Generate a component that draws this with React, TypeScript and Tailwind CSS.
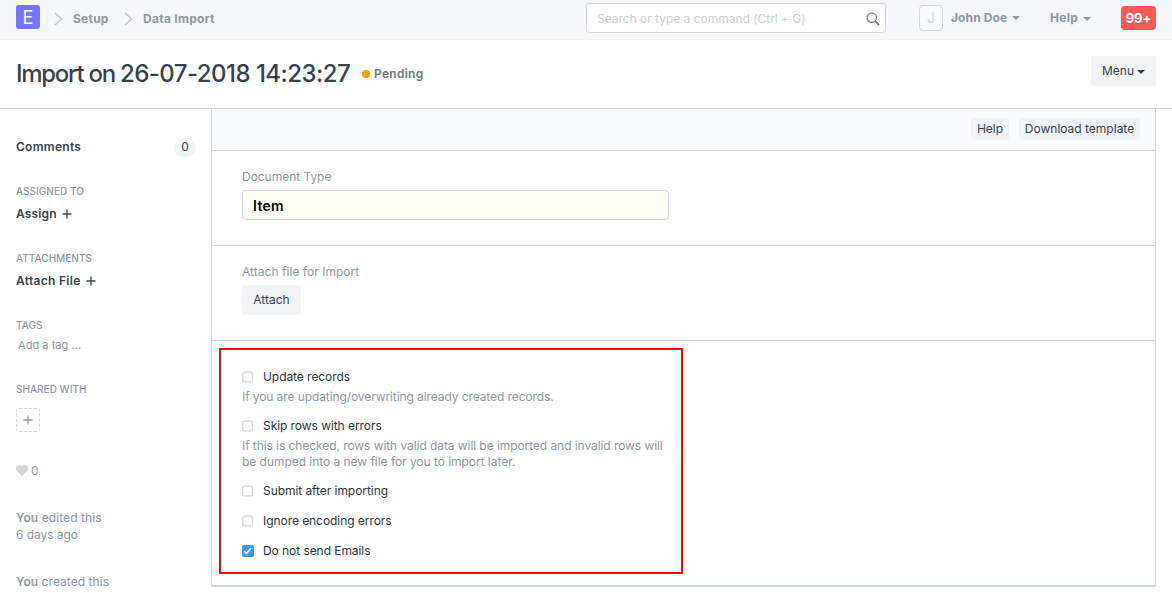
import React from "react";

function Caret({ className = "" }: { className?: string }) {
  return (
    <svg className={className} width="8" height="4" viewBox="0 0 8 4" fill="currentColor">
      <path d="M0 0h8L4 4z" />
    </svg>
  );
}

function Chevron() {
  return (
    <svg width="9" height="14" viewBox="0 0 9 14" fill="none" stroke="#c0c9d2" strokeWidth="1.6">
      <path d="M1 1l6.5 6L1 13" />
    </svg>
  );
}

function Plus({ color = "#36414c" }: { color?: string }) {
  return (
    <svg width="10" height="10" viewBox="0 0 10 10" fill="none" stroke={color} strokeWidth="1.3">
      <path d="M5 0.5v9M0.5 5h9" />
    </svg>
  );
}

function Check({ label, checked = false }: { label: string; checked?: boolean }) {
  return (
    <label className="flex h-4 items-center text-[#2b3440]">
      {checked ? (
        <span className="flex h-3 w-[11.5px] items-center justify-center rounded-[2px] bg-[#3b99fc]">
          <svg width="9" height="8" viewBox="0 0 9 8" fill="none" stroke="#fff" strokeWidth="1.6">
            <path d="M1 4l2.4 2.3L8 1.3" />
          </svg>
        </span>
      ) : (
        <span className="flex h-3 w-[11.5px]">
          <svg width="12" height="12" viewBox="0 0 12 12" fill="#fff" stroke="#d1d8dd" strokeWidth="1.4">
            <rect x="0.7" y="0.9" width="10.2" height="10.2" rx="1.8" />
          </svg>
        </span>
      )}
      <span className="ml-[9.5px] tracking-[-0.06px]">{label}</span>
    </label>
  );
}

function SideHeading({ children }: { children: React.ReactNode }) {
  return <h6 className="h-4 text-[10px] leading-4 font-medium tracking-[0.03px] text-[#8d99a6]">{children}</h6>;
}

export default function App() {
  return (
    <div className="flex h-[593px] w-[1172px] flex-col overflow-hidden bg-white font-['Inter',sans-serif] text-xs leading-4 text-[#36414c]">
      <header className="flex h-10 shrink-0 items-start border-b border-[#ebeff2] bg-[#f5f7fa] px-4 font-bold text-[#8d99a6]">
        <div className="mt-[5px] flex size-6 items-center justify-center rounded-[3px] bg-[#7575ff] pt-0.5 text-[18px] leading-6 font-normal text-white">
          E
        </div>
        <div className="mt-[11px] ml-[14px] flex items-center">
          <Chevron />
          <span className="ml-[10px] w-[36px] tracking-[0.25px]">Setup</span>
          <span className="ml-[15px] flex"><Chevron /></span>
          <span className="ml-[10px] tracking-[0.28px]">Data Import</span>
        </div>
        <div className="mt-[3px] ml-auto flex h-[30px] w-[300px] items-center rounded-[3px] border border-[#d1d8dd] bg-white pt-px pr-[5px] pl-[10px] font-normal text-[#c9d1d8]">
          <span className="tracking-[-0.02px]">Search or type a command (Ctrl + G)</span>
          <svg className="ml-auto" width="14" height="14" viewBox="0 0 14 14" fill="none" stroke="#6c7680">
            <circle cx="5.700" cy="5.700" r="4.700" strokeWidth="1.2" />
            <path d="M9.200 9.200l4 4" strokeWidth="1.800" />
          </svg>
        </div>
        <div className="mt-[5px] ml-[33px] flex h-[26px] w-6 shrink-0 items-center justify-center rounded border border-[#d1d8dd] bg-[#fafbfc] text-[14px] font-normal text-[#d1d8dd]">
          J
        </div>
        <div className="mt-[10px] ml-2 flex w-[99px] items-center">
          <span className="tracking-[0.1px]">John Doe</span>
          <Caret className="ml-[5px]" />
        </div>
        <div className="mt-[10px] flex w-[71px] items-center">
          <span className="tracking-[0.3px]">Help</span>
          <Caret className="mt-0.5 ml-[5px]" />
        </div>
        <div className="mt-[6px] flex h-6 w-[35px] items-center justify-center rounded bg-[#ff5858] text-[13px] tracking-[-0.1px] text-white">
          99+
        </div>
      </header>

      <div className="flex h-[69px] shrink-0 items-start border-b border-[#d1d8dd] px-4">
        <h1 className="mt-[18px] w-[334px] text-2xl leading-8 font-medium tracking-[-0.54px] whitespace-nowrap">
          <span className="tracking-[-1.28px]">Import on </span>
          26-07-2018 14:23:27
        </h1>
        <span className="mt-[30px] ml-[12px] size-2 rounded-full bg-[#ffa00a]" />
        <span className="mt-[26px] ml-[4px] font-semibold tracking-[0.28px] text-[#6c7680]">Pending</span>
        <button className="mt-4 ml-auto flex h-[30px] w-[65px] items-center rounded-[3px] bg-[#f0f4f7] pl-[11px]">
          Menu
          <Caret className="mt-0.5 ml-[3px]" />
        </button>
      </div>

      <div className="flex min-h-0 flex-1">
        <aside className="flex w-[211px] shrink-0 flex-col pr-4 pl-4">
          <div className="mt-7 flex h-5 items-center justify-between font-semibold">
            <span className="tracking-[0.28px]">Comments</span>
            <span className="-mr-px flex h-[19px] w-[22px] items-center justify-center rounded-full bg-[#f0f4f7] font-normal">0</span>
          </div>
          <div className="mt-[26px]">
            <SideHeading>ASSIGNED TO</SideHeading>
            <div className="mt-[7px] flex items-center gap-[5px] font-semibold tracking-[0.15px]">
              Assign <Plus />
            </div>
          </div>
          <div className="mt-7">
            <SideHeading>ATTACHMENTS</SideHeading>
            <div className="mt-[7px] flex items-center gap-[5px] font-semibold tracking-[0.3px]">
              Attach File <Plus />
            </div>
          </div>
          <div className="mt-7">
            <SideHeading>TAGS</SideHeading>
            <div className="mt-1 pl-[2px] text-[11px] tracking-[0.04px] text-[#8d99a6]">Add a tag ...</div>
          </div>
          <div className="mt-7">
            <SideHeading>SHARED WITH</SideHeading>
            <div className="mt-[11px] flex size-6 items-center justify-center rounded-[3px] border border-dashed border-[#d1d8dd]">
              <Plus color="#8d99a6" />
            </div>
          </div>
          <div className="mt-[31px] flex items-center text-[#8d99a6]">
            <svg className="-mt-px" width="12" height="11" viewBox="0 0 12 11" fill="#d1d8dd">
              <path d="M6 11L1 6C-.5 4.400-.2 2 .8 1 2.400-.5 4.800-.2 6 1.700 7.200-.2 9.600-.5 11.200 1c1 1 1.300 3.400-.2 5z" />
            </svg>
            <span className="ml-[3px]">0</span>
          </div>
          <div className="mt-[30px] leading-[17px] tracking-[0.08px] text-[#8d99a6]">
            <b className="font-semibold">You</b> edited this
            <br />
            <span className="tracking-[-0.05px]">6 days ago</span>
          </div>
          <div className="mt-[30px] leading-[17px] tracking-[0.05px] whitespace-nowrap text-[#8d99a6]">
            <b className="font-semibold">You</b> created this
          </div>
        </aside>

        <main className="relative flex h-[478px] w-[945px] flex-col border-x border-b-2 border-[#d1d8dd]">
          <div className="flex h-[42px] shrink-0 items-start justify-end gap-[10px] border-b border-[#d1d8dd] bg-[#fafbfc] pt-[9px] pr-[15px]">
            <button className="flex h-[22px] w-[38px] items-center justify-center rounded-[3px] bg-[#f0f4f7]">Help</button>
            <button className="flex h-[22px] w-[121px] items-center justify-center rounded-[3px] bg-[#f0f4f7] whitespace-nowrap">
              Download template
            </button>
          </div>
          <section className="h-[95px] shrink-0 border-b border-[#d1d8dd] pt-[18px] pl-[30px]">
            <div className="tracking-[-0.03px] text-[#8d99a6]">Document Type</div>
            <div className="mt-[5px] flex h-[30px] w-[427px] items-center rounded border border-[#d1d8dd] bg-[#fffdf4] pt-px pl-[10px] text-[14px] font-semibold tracking-[0.3px] text-black">
              Item
            </div>
          </section>
          <section className="h-[95px] shrink-0 border-b border-[#d1d8dd] pt-[18px] pl-[30px]">
            <div className="tracking-[0.04px] text-[#8d99a6]">Attach file for Import</div>
            <button className="mt-[5px] flex h-[30px] w-[59px] items-center justify-center rounded-[3px] bg-[#f0f4f7]">Attach</button>
          </section>
          <section className="flex w-[470px] flex-col pt-7 pl-[30px] text-[#8d99a6]">
            <Check label="Update records" />
            <p className="mt-1 tracking-[-0.09px] whitespace-nowrap">If you are updating/overwriting already created records.</p>
            <div className="mt-[13px]"><Check label="Skip rows with errors" /></div>
            <p className="mt-1 tracking-[-0.07px] whitespace-nowrap">
              If this is checked, rows with valid data will be imported and invalid rows will
              <br />
              <span className="tracking-[-0.04px]">be dumped into a new file for you to import later.</span>
            </p>
            <div className="mt-[13px] flex flex-col gap-[14px]">
              <Check label="Submit after importing" />
              <Check label="Ignore encoding errors" />
              <Check label="Do not send Emails" checked />
            </div>
          </section>
          <div className="pointer-events-none absolute top-[239px] left-[7px] h-[226px] w-[464px] border-2 border-[#ff0000]" />
        </main>
      </div>
    </div>
  );
}
